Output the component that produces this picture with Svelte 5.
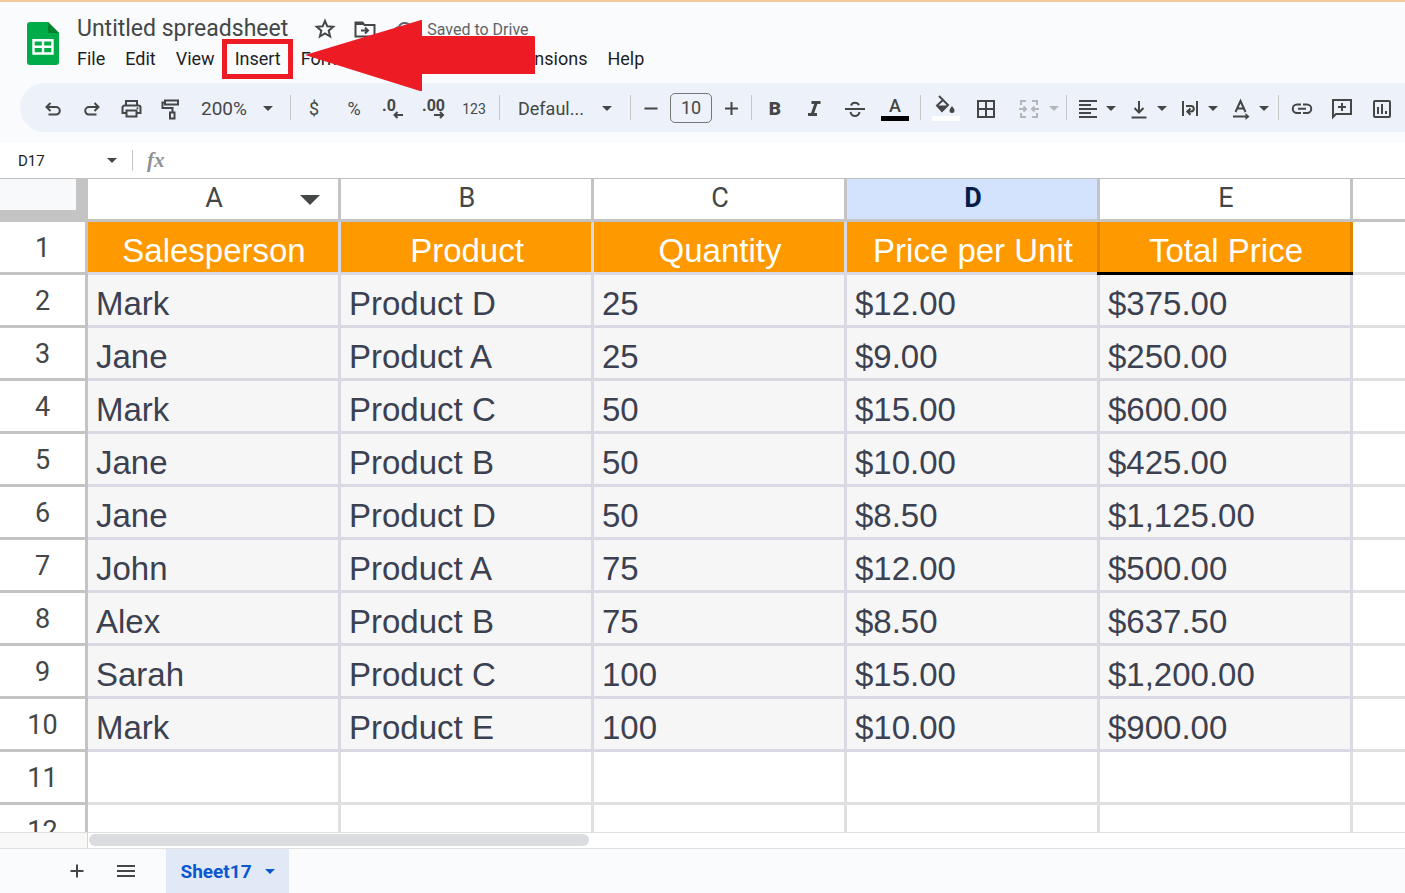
<script lang="ts">
  const columns = ['A', 'B', 'C', 'D', 'E'];
  const headings = ['Salesperson', 'Product', 'Quantity', 'Price per Unit', 'Total Price'];
  const menusBefore = ['File', 'Edit', 'View'];
  const menusAfter = ['Format', 'Data', 'Tools', 'Extensions', 'Help'];

  const sales = [
    ['Mark', 'Product D', '25', '$12.00', '$375.00'],
    ['Jane', 'Product A', '25', '$9.00', '$250.00'],
    ['Mark', 'Product C', '50', '$15.00', '$600.00'],
    ['Jane', 'Product B', '50', '$10.00', '$425.00'],
    ['Jane', 'Product D', '50', '$8.50', '$1,125.00'],
    ['John', 'Product A', '75', '$12.00', '$500.00'],
    ['Alex', 'Product B', '75', '$8.50', '$637.50'],
    ['Sarah', 'Product C', '100', '$15.00', '$1,200.00'],
    ['Mark', 'Product E', '100', '$10.00', '$900.00'],
  ];
  const emptyRows = [11, 12];

  let cellName = $state('D17');
  let formula = $state('');
  let fontSize = $state('10');
  let selectedColumn = $state('D');
</script>

{#snippet caret()}
  <svg class="caret" viewBox="0 0 10 5" aria-hidden="true"><path d="M0 0h10L5 5z" /></svg>
{/snippet}

<div class="app">
  <header class="header">
    <svg class="logo" viewBox="0 0 32 43" aria-label="Sheets">
      <path d="M3 0h18l11 11v29a3 3 0 0 1-3 3H3a3 3 0 0 1-3-3V3a3 3 0 0 1 3-3z" fill="#00ac47" />
      <path d="M21 0l11 11H21z" fill="#00832d" />
      <path d="M6.500 18.200h19v13.300h-19zM16 18v13M6 24.800h20" fill="none" stroke="#fff" stroke-width="2.400" />
    </svg>

    <div class="header-text">
      <div class="title-row">
        <h1>Untitled spreadsheet</h1>
        <button class="title-btn star" aria-label="Star">
          <svg class="icon" viewBox="0 0 24 24"><path d="M12 3.800l2.300 5.500 5.900.5-4.500 3.900 1.400 5.800-5.100-3.100-5.100 3.100 1.400-5.800-4.500-3.900 5.900-.5z" class="line" /></svg>
        </button>
        <button class="title-btn folder" aria-label="Move">
          <svg class="icon" viewBox="0 0 24 24"><path d="M2.500 5.500h7l2 2.500h10v11.500h-19z" class="line" /><path d="M2 5h8l2 3H2z" /><path d="M8 13.500h7M12 10.500l3 3-3 3" class="line" /></svg>
        </button>
        <button class="status">
          <svg class="icon" viewBox="0 0 24 24"><path d="M6.500 19a4.500 4.500 0 0 1-.6-9A6.300 6.300 0 0 1 18 11.500a3.800 3.800 0 0 1 .5 7.500z" class="line" /></svg>
          Saved to Drive
        </button>
      </div>

      <nav class="menus">
        {#each menusBefore as menu}
          <button>{menu}</button>
        {/each}
        <div class="highlighted">
          <button>Insert</button>
          <span class="highlight-box"></span>
          <svg class="arrow" viewBox="0 0 230 72" aria-hidden="true">
            <path d="M0 35L116 0h1v16h112l1 1v37H117v17h-2z" fill="#ed1c24" />
          </svg>
        </div>
        {#each menusAfter as menu}
          <button>{menu}</button>
        {/each}
      </nav>
    </div>
  </header>

  <div class="toolbar" role="toolbar" aria-label="Main">
    <div class="group first">
      <button aria-label="Undo"><svg class="icon" viewBox="0 0 24 24"><path d="M9.500 6L5.500 10l4 4M6 10h9a3.800 3.800 0 0 1 0 7.600H7.500" class="line" /></svg></button>
      <button aria-label="Redo"><svg class="icon" viewBox="0 0 24 24"><path d="M14.500 6l4 4-4 4M18 10H9a3.800 3.800 0 0 0 0 7.600h7.500" class="line" /></svg></button>
      <button aria-label="Print"><svg class="icon" viewBox="0 0 24 24"><path d="M7 8V4h11v4M7 16H3.500v-5.500a2 2 0 0 1 2-2h14a2 2 0 0 1 2 2V16H18M7.500 13.500h10v6h-10z" class="line" /><circle cx="18.500" cy="11.200" r="1" /></svg></button>
      <button aria-label="Paint format"><svg class="icon" viewBox="0 0 24 24"><path d="M7 3.500h13v4H7zM7 5.500H4.500v5.500h10v4M12 15.500h4.500v6H12z" class="line" /></svg></button>
    </div>
    <div class="select zoom">
      <select aria-label="Zoom"><option>200%</option></select>
      {@render caret()}
    </div>
    <div class="group formats">
      <button class="text-btn">$</button>
      <button class="text-btn">%</button>
      <button aria-label="Decrease decimal places">
        <svg class="icon" viewBox="0 0 24 24"><text x="0" y="14">.0</text><path d="M21 18h-8M15.500 15l-3 3 3 3" class="line" /></svg>
      </button>
      <button aria-label="Increase decimal places">
        <svg class="icon" viewBox="0 0 24 24"><text x="0" y="14">.00</text><path d="M12 18h8M18 15l3 3-3 3" class="line" /></svg>
      </button>
      <button class="text-btn small">123</button>
    </div>
    <div class="select font">
      <select aria-label="Font"><option>Defaul...</option></select>
      {@render caret()}
    </div>
    <div class="group size">
      <button aria-label="Decrease font size"><svg class="icon" viewBox="0 0 24 24"><path d="M5.500 11.500h13" class="line" /></svg></button>
      <input aria-label="Font size" bind:value={fontSize} />
      <button aria-label="Increase font size"><svg class="icon" viewBox="0 0 24 24"><path d="M5 11.500h13M11.500 5v13" class="line" /></svg></button>
    </div>
    <div class="group style">
      <button class="bold" aria-label="Bold">B</button>
      <button aria-label="Italic"><svg class="icon" viewBox="0 0 24 24"><path d="M8.500 5.500h9M5 17.500h9M13.300 5.500l-4.200 12" class="line thick" /></svg></button>
      <button aria-label="Strikethrough"><svg class="icon" viewBox="0 0 24 24"><path d="M2 12h20M8 8.500q1-2.800 4-2.800t4 2.500M7.500 15q.8 4 4.500 4t4.500-4" class="line" /></svg></button>
      <button aria-label="Text color"><svg class="swatch" viewBox="0 0 28 28"><text x="14" y="17" text-anchor="middle" class="letter">A</text><path d="M0 21h28v5H0z" fill="#000" /></svg></button>
    </div>
    <div class="group fill">
      <button aria-label="Fill color">
        <svg class="swatch" viewBox="0 0 28 28">
          <path d="M7 1l9 9-6 6-5-5.500L11 5" class="line" /><path d="M5 10.500h11l-6 6zM20 11q2.500 3 2.500 4.500a2.500 2.500 0 0 1-5 0Q17.500 14 20 11z" />
          <path d="M0 21h28v5H0z" fill="#fff" />
        </svg>
      </button>
      <button aria-label="Borders"><svg class="icon" viewBox="0 0 24 24"><path d="M4 4h16v16H4zM12 4v16M4 12h16" class="line" /></svg></button>
      <button class="combo merge" aria-label="Merge cells" disabled>
        <svg class="icon" viewBox="0 0 24 24"><path d="M9 4H4v4M4 16v4h5M15 4h5v4M20 16v4h-5M2 12h7M6.500 9.500L9 12l-2.500 2.500M22 12h-7M17.500 9.500L15 12l2.500 2.500" class="line" /></svg>
        {@render caret()}
      </button>
    </div>
    <div class="group align">
      <button class="combo" aria-label="Horizontal align"><svg class="icon" viewBox="0 0 24 24"><path d="M3 4h18M3 8h12M3 12h18M3 16h12M3 20h18" class="line" /></svg>{@render caret()}</button>
      <button class="combo" aria-label="Vertical align"><svg class="icon" viewBox="0 0 24 24"><path d="M12 4v11.500M7.500 11l4.500 4.500 4.500-4.500M4.500 20.500h15" class="line" /></svg>{@render caret()}</button>
      <button class="combo" aria-label="Text wrapping"><svg class="icon" viewBox="0 0 24 24"><path d="M5 4v15M19 4v15M8 9h5a2.800 2.800 0 0 1 0 5.600H9.500M12.500 11.500L9.300 14.600l3.200 3.200" class="line" /></svg>{@render caret()}</button>
      <button class="combo" aria-label="Text rotation"><svg class="icon" viewBox="0 0 24 24"><path d="M6.500 15L11.500 4l5 11M8.500 11.500h6M4 19.500h14" class="line" /><path d="M16.500 16l4 3.500-4 3.500z" /></svg>{@render caret()}</button>
    </div>
    <div class="group insert">
      <button aria-label="Insert link"><svg class="icon" viewBox="0 0 24 24"><path d="M11 16H7a4 4 0 0 1 0-8.500H11M13 7.500h4a4 4 0 0 1 0 8.500H13M8 11.800h8" class="line" /></svg></button>
      <button aria-label="Insert comment"><svg class="icon" viewBox="0 0 24 24"><path d="M3 20V3h18v14H6zM12 6v8M8 10h8" class="line" /></svg></button>
      <button aria-label="Insert chart"><svg class="icon" viewBox="0 0 24 24"><rect x="4" y="4" width="16" height="16" rx="1" class="line" /><path d="M8 10v7M12 7v10M16 14v3" class="line" /></svg></button>
    </div>
  </div>

  <div class="formula-bar">
    <input class="name-box" aria-label="Name box" bind:value={cellName} />
    <button class="name-caret" aria-label="Named ranges">{@render caret()}</button>
    <label class="fx" for="formula">fx</label>
    <input id="formula" class="formula" bind:value={formula} />
  </div>

  <main class="grid">
    <table>
      <colgroup>
        <col class="col-number" />
        {#each columns as column}
          <col class="col-data" />
        {/each}
        <col />
      </colgroup>
      <thead>
        <tr>
          <th class="corner" aria-label="Select all"></th>
          {#each columns as column}
            <th class="col-head" class:selected={column === selectedColumn} onclick={() => (selectedColumn = column)}>
              <div class="col-label">
                <span>{column}</span>
                {#if column === 'A'}
                  <button aria-label="Column options">{@render caret()}</button>
                {/if}
              </div>
            </th>
          {/each}
          <th class="col-head"></th>
        </tr>
      </thead>
      <tbody>
        <tr class="heading">
          <th>1</th>
          {#each headings as heading}
            <td>{heading}</td>
          {/each}
          <td class="blank"></td>
        </tr>
        {#each sales as row, i}
          <tr class="data">
            <th>{i + 2}</th>
            {#each row as value}
              <td>{value}</td>
            {/each}
            <td class="blank"></td>
          </tr>
        {/each}
        {#each emptyRows as n}
          <tr>
            <th>{n}</th>
            {#each columns as column}
              <td></td>
            {/each}
            <td></td>
          </tr>
        {/each}
      </tbody>
    </table>
  </main>

  <div class="scroll-row">
    <div class="scroll-gap"></div>
    <div class="track"><div class="thumb"></div></div>
  </div>

  <footer class="sheets">
    <button class="sheet-btn" aria-label="Add sheet"><svg class="icon" viewBox="0 0 24 24"><path d="M5.500 12h13M12 5.500v13" class="line" /></svg></button>
    <button class="sheet-btn" aria-label="All sheets"><svg class="icon" viewBox="0 0 24 24"><path d="M3 7h18M3 12h18M3 17h18" class="line" /></svg></button>
    <button class="tab">Sheet17 {@render caret()}</button>
  </footer>
</div>

<style>
  :global(body) {
    margin: 0;
  }

  .app {
    display: flex;
    flex-direction: column;
    height: 100vh;
    overflow: hidden;
    box-sizing: border-box;
    border-top: 2px solid #f3cb9b;
    background: #f9fbfd;
    color: #444746;
    font-family: Roboto, sans-serif;
  }

  button,
  input,
  select {
    padding: 0;
    border: none;
    background: none;
    color: inherit;
    font: inherit;
    outline: none;
  }

  button {
    display: flex;
    align-items: center;
    justify-content: center;
    box-sizing: border-box;
    cursor: pointer;
  }

  svg {
    display: block;
    flex: none;
    fill: currentColor;
  }

  .icon {
    width: 24px;
    height: 24px;
  }

  .icon text {
    font-size: 16px;
    font-weight: 700;
  }

  .line {
    fill: none;
    stroke: currentColor;
    stroke-width: 2;
  }

  .thick {
    stroke-width: 3;
  }

  .caret {
    width: 10px;
    height: 5px;
  }

  .header {
    display: flex;
    flex: none;
    gap: 18px;
    padding: 12px 0 9px 27px;
  }

  .logo {
    width: 32px;
    height: 43px;
    margin-top: 8px;
  }

  .title-row {
    display: flex;
    align-items: center;
    height: 30px;
  }

  h1 {
    margin: 0;
    font-size: 23px;
    font-weight: 400;
    line-height: 30px;
    white-space: nowrap;
  }

  .star {
    margin-left: 25px;
  }

  .folder {
    margin-left: 16px;
  }

  .status {
    gap: 10px;
    margin-left: 16px;
    color: #5f6368;
    font-size: 16px;
    white-space: nowrap;
  }

  .menus {
    display: flex;
    gap: 20px;
    height: 30px;
    color: #1f1f1f;
    font-size: 18px;
  }

  .menus button {
    padding-bottom: 2px;
  }

  .highlighted {
    display: flex;
    position: relative;
  }

  .highlight-box {
    position: absolute;
    inset: -5px -12px -5px -13px;
    border: 5px solid #ed1c24;
    pointer-events: none;
  }

  .arrow {
    position: absolute;
    top: -24px;
    left: 70px;
    z-index: 1;
    width: 230px;
    height: 72px;
    pointer-events: none;
  }

  .toolbar {
    display: flex;
    flex: none;
    align-items: center;
    height: 49px;
    margin: 0 0 11px 20px;
    overflow: hidden;
    border-radius: 25px 0 0 25px;
    background: #edf2fa;
  }

  .group,
  .select {
    display: flex;
    flex: none;
    align-items: center;
    height: 25px;
    border-right: 1px solid #c7c7c7;
  }

  .group button {
    width: 40px;
    height: 34px;
    padding-top: 2px;
  }

  .group.first {
    padding-left: 13px;
    border: none;
  }

  .group.first button,
  .group.size button {
    width: 39px;
  }

  .select select {
    appearance: none;
    padding-top: 2px;
    font-size: 18px;
  }

  .select .caret {
    margin-top: 1px;
  }

  .zoom {
    width: 101px;
  }

  .select.zoom select {
    width: 62px;
    margin-left: 12px;
    font-size: 19px;
  }

  .font {
    width: 130px;
  }

  .font select {
    width: 84px;
    margin-left: 18px;
  }

  .formats {
    padding: 0 5px 0 3px;
  }

  .text-btn {
    font-size: 18px;
  }

  .small {
    font-size: 14px;
  }

  .size input {
    width: 42px;
    height: 30px;
    box-sizing: border-box;
    border: 1px solid #747775;
    border-radius: 5px;
    font-size: 18px;
    text-align: center;
  }

  .style {
    padding: 0 5px 0 3px;
  }

  .bold {
    font-size: 19px;
    font-weight: 900;
  }

  .swatch {
    width: 28px;
    height: 28px;
  }

  .letter {
    font-size: 18px;
    font-weight: 500;
  }

  .fill {
    padding-left: 5px;
  }

  .group .combo {
    justify-content: flex-start;
    gap: 6px;
    width: 51px;
    padding-left: 9px;
  }

  .group .merge {
    gap: 8px;
    width: 60px;
    padding-left: 11px;
    color: #b4b7ba;
  }

  .align {
    padding-right: 7px;
  }

  .insert {
    padding-left: 3px;
    border: none;
  }

  .formula-bar {
    display: flex;
    flex: none;
    align-items: center;
    height: 35px;
    border-bottom: 1px solid #c0c0c0;
    background: #fff;
  }

  .name-box {
    width: 80px;
    padding-left: 18px;
    color: #1f1f1f;
    font-size: 15px;
  }

  .name-caret {
    width: 35px;
    height: 21px;
    padding-right: 6px;
    border-right: 1px solid #c7c7c7;
  }

  .fx {
    padding: 0 14px;
    color: #8f9294;
    font-family: 'Liberation Serif', serif;
    font-size: 21px;
    font-style: italic;
    font-weight: 700;
  }

  .formula {
    flex: 1;
    min-width: 0;
    font-size: 15px;
  }

  .grid {
    flex: 1;
    min-height: 0;
    overflow: hidden;
    background: #fff;
  }

  table {
    width: 100%;
    table-layout: fixed;
    border-collapse: separate;
    border-spacing: 0;
  }

  .col-number {
    width: 88px;
  }

  .col-data {
    width: 253px;
  }

  th,
  td {
    box-sizing: border-box;
    height: 53px;
    padding: 0;
    border: 0 solid #e0e0e0;
    border-width: 0 3px 3px 0;
  }

  th {
    padding-top: 2px;
    border-color: #c4c4c4;
    font-size: 27px;
    font-weight: 400;
    line-height: 32px;
  }

  .corner {
    height: 43px;
    border-width: 0 12px 12px 0;
    background: #f8f9fa;
  }

  .col-head {
    height: 43px;
    padding: 0 0 3px 2px;
  }

  .selected {
    background: #d3e3fd;
    color: #041e49;
    font-weight: 700;
  }

  .col-label {
    display: grid;
    grid-template-columns: 1fr auto 1fr;
    align-items: center;
  }

  .col-label span {
    grid-column: 2;
  }

  .col-label button {
    justify-self: end;
    padding: 4px 18px 0 0;
  }

  .col-label .caret {
    width: 20px;
    height: 10px;
  }

  td {
    padding: 0 6px 2px 8px;
    color: #3b4151;
    font-family: 'Liberation Sans', Arial, sans-serif;
    font-size: 33px;
    line-height: 38px;
    vertical-align: bottom;
    white-space: nowrap;
  }

  .data td:not(.blank) {
    border-color: #d9d9e3;
    background: #f6f6f6;
  }

  .heading td:not(.blank) {
    position: relative;
    border-color: #d9d9e3;
    background: #ff9900;
    background-clip: padding-box;
    color: #fff;
    text-align: center;
  }

  .heading td:nth-child(5),
  .heading td:nth-child(6) {
    border-right-color: #e08700 !important;
  }

  .heading td:nth-child(6)::after {
    content: '';
    position: absolute;
    right: -3px;
    bottom: -3px;
    left: -3px;
    height: 3px;
    background: #000;
  }

  td:last-child,
  th:last-child {
    border-right: none;
  }

  .scroll-row {
    display: flex;
    flex: none;
    height: 15px;
    border-top: 1px solid #e0e0e0;
    border-bottom: 1px solid #e0e0e0;
  }

  .scroll-gap {
    width: 87px;
    border-right: 1px solid #d5d5d5;
    background: #f8f8f8;
  }

  .track {
    flex: 1;
    padding: 1px;
    background: #fff;
  }

  .thumb {
    width: 38%;
    height: 12px;
    border-radius: 6px;
    background: #dadce0;
  }

  .sheets {
    display: flex;
    flex: none;
    height: 44px;
    padding-left: 52px;
  }

  .sheet-btn {
    width: 49px;
  }

  .tab {
    gap: 13px;
    width: 123px;
    margin-left: 16px;
    background: #e1e9f7;
    color: #0b57d0;
    font-size: 19px;
    font-weight: 700;
  }
</style>
